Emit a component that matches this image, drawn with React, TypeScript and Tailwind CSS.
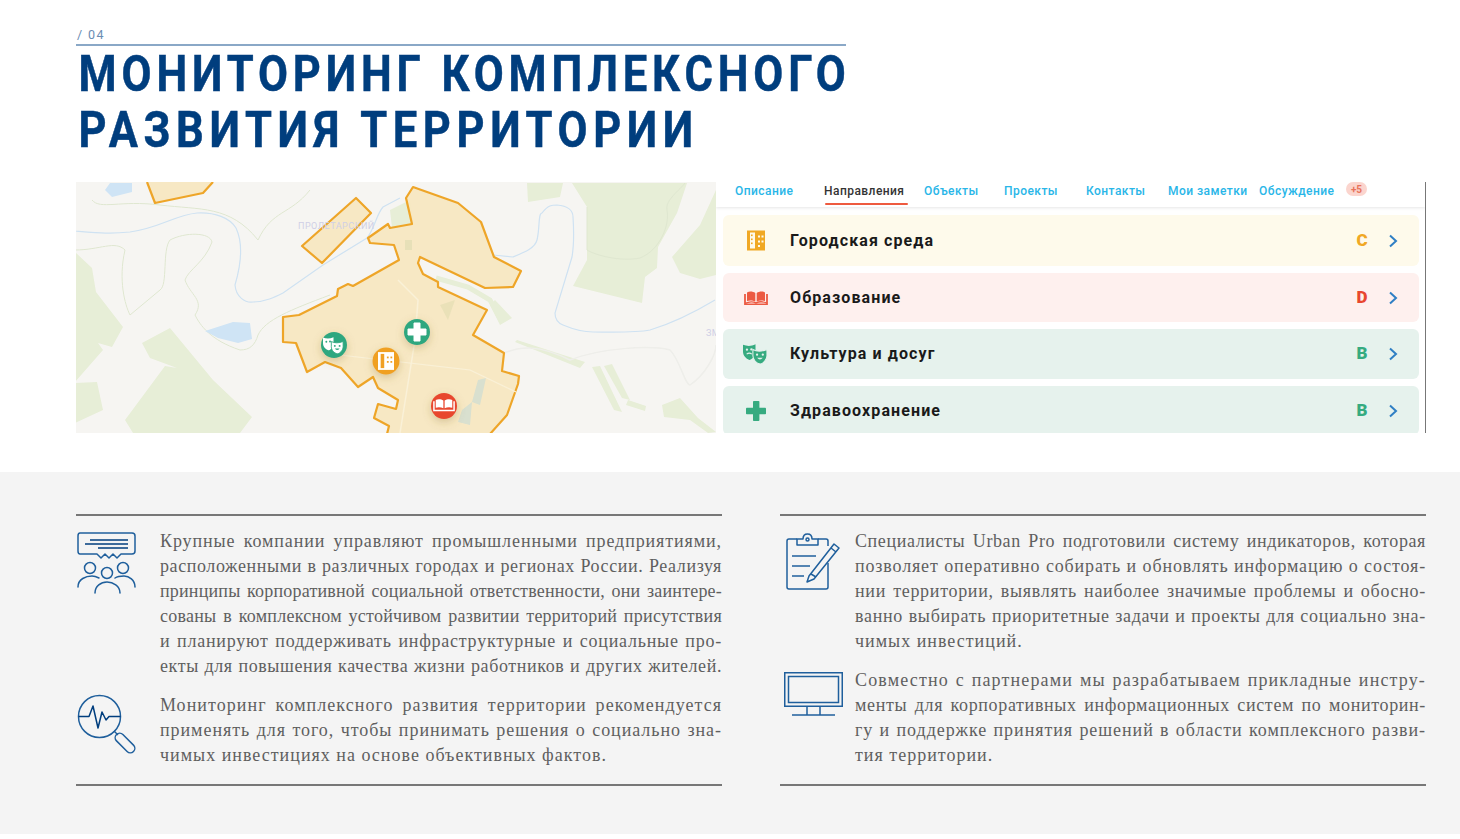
import React from "react";

const serif = "font-['Liberation_Serif',serif]";

const MaskIcon = ({ fg, bg, size = 25 }: { fg: string; bg: string; size?: number }) => (
  <svg width={size} height={size * 0.85} viewBox="0 0 24 20">
    <path d="M0 1.5 C4 3 8 3 12 1 L12 9 C12 13 8 16 6 16 C3 15 0 12 0 8 Z" fill={fg} />
    <circle cx="3.8" cy="6.2" r="1.1" fill={bg} />
    <circle cx="8" cy="6" r="1.1" fill={bg} />
    <path d="M3.5 10.5 Q6 8.5 8.5 10.5" stroke={bg} strokeWidth="1" fill="none" />
    <path d="M9.5 6 C13 8 18 8 23 6 L23 12 C23 16 19 20 16.5 20 C13 19.5 9.5 16 9.5 12 Z" fill={fg} stroke={bg} strokeWidth="1" />
    <circle cx="13.5" cy="11" r="1.1" fill={bg} />
    <circle cx="19" cy="11" r="1.1" fill={bg} />
    <path d="M13.5 14 Q16.3 17.5 19 14 Z" fill={bg} />
  </svg>
);

const BuildingIcon = ({ fg, bg, w = 18, h = 21 }: { fg: string; bg: string; w?: number; h?: number }) => (
  <svg width={w} height={h} viewBox="0 0 18 20">
    <rect x="0" y="0" width="18" height="20" fill={fg} />
    <rect x="3" y="2" width="5" height="16" fill={bg} />
    <rect x="4" y="4" width="1.6" height="1.6" fill={fg} />
    <rect x="4" y="8" width="1.6" height="1.6" fill={fg} />
    <rect x="4" y="12" width="1.6" height="1.6" fill={fg} />
    <rect x="11" y="5" width="2" height="2" fill={bg} />
    <rect x="14.5" y="5" width="2" height="2" fill={bg} />
    <rect x="11" y="10" width="2" height="2" fill={bg} />
    <rect x="14.5" y="10" width="2" height="2" fill={bg} />
    <rect x="11" y="14.5" width="2" height="2" fill={bg} />
  </svg>
);

const BookIcon = ({ fg, w = 24, h = 14 }: { fg: string; w?: number; h?: number }) => (
  <svg width={w} height={h} viewBox="0 0 24 14">
    <path d="M3 1.5 C5.5 0 9 0.5 11.3 2 L11.3 10.5 C9 9.3 5.5 9 3 10 Z" fill={fg} />
    <path d="M21 1.5 C18.5 0 15 0.5 12.7 2 L12.7 10.5 C15 9.3 18.5 9 21 10 Z" fill={fg} />
    <path d="M1 3 L1 13.5 L23 13.5 L23 3" fill="none" stroke={fg} strokeWidth="1.8" />
    <path d="M1 12.5 C5 10.5 9 10.5 12 12 C15 10.5 19 10.5 23 12" fill="none" stroke={fg} strokeWidth="1.4" />
  </svg>
);

const PlusIcon = ({ fg, size = 20 }: { fg: string; size?: number }) => (
  <svg width={size} height={size} viewBox="0 0 20 20">
    <rect x="7" y="0" width="6.4" height="20" rx="0.8" fill={fg} />
    <rect x="0" y="6.8" width="20" height="6.4" rx="0.8" fill={fg} />
  </svg>
);

const Map = () => (
  <svg width="640" height="251" viewBox="76 182 640 251" className="block shrink-0">
    <defs>
      <filter id="soft" x="-10%" y="-10%" width="120%" height="120%">
        <feGaussianBlur stdDeviation="0.5" />
      </filter>
      <filter id="shadow" x="-50%" y="-50%" width="200%" height="200%">
        <feDropShadow dx="0" dy="3" stdDeviation="4" floodColor="#8a6d2a" floodOpacity="0.3" />
      </filter>
    </defs>
    <rect x="76" y="182" width="640" height="251" fill="#f6f5f2" />
    <g filter="url(#soft)">
      <g fill="#e7eed7">
        <path d="M75 252 L92 268 L96 292 L123 327 L112 347 L98 343 L103 350 L75 382 Z" />
        <path d="M75 383 L97 382 L103 410 L75 423 Z" />
        <path d="M142 343 L170 328 L213 380 L252 417 L240 433 L133 433 L125 420 L165 366 L177 368 L150 358 Z" />
        <path d="M527 183 L563 183 L560 197 L528 202 Z" />
        <path d="M572 183 L687 183 L677 213 L658 247 L657 268 L645 277 L642 303 L573 286 L587 260 L587 220 L587 207 Z" />
        <path d="M716 190 L700 225 L672 257 L680 273 L700 279 L716 275 Z" />
        <path d="M390 210 L410 200 L414 225 L392 228 Z" />
        <path d="M517 340 L585 362 L580 368 L515 342 Z" />
        <path d="M592 367 L600 366 L622 412 L614 410 Z" />
        <path d="M604 366 L612 364 L630 400 L622 398 Z" />
        <path d="M628 400 L646 406 L645 411 L626 405 Z" />
        <path d="M662 405 L680 398 L698 418 L716 432 L708 433 L690 420 L664 417 Z" />
        <path d="M495 300 L512 318 L500 325 L490 305 Z" />
      </g>
      <path d="M436 278 L468 287 L490 300 L502 322" fill="none" stroke="#e7eed7" strokeWidth="5" />
      <g fill="none" stroke="#cfe2f2" strokeWidth="1.2">
        <path d="M75 231 C100 233 110 234 130 232 C160 228 175 215 197 213 C215 212 230 218 236 228 C244 245 240 268 235 285 C236 297 245 303 253 302 C265 302 275 297 283 293 L323 265 L367 238 C375 228 376 215 383 207 L400 198" />
        <path d="M493 255 L513 257 C525 252 535 248 537 240 C540 228 538 213 542 213 C548 205 552 205 557 205 C568 206 573 210 573 217 C574 232 574 245 572 257 L555 313 C555 320 558 323 563 325 C575 330 585 332 593 332 C610 332 635 333 650 330 C670 324 695 312 715 300" />
      </g>
      <g fill="none" stroke="#dfe7d0" strokeWidth="1">
        <path d="M92 200 C100 210 120 200 160 205 C200 210 230 205 258 240 C272 210 290 215 310 190" />
        <path d="M75 250 C100 250 115 240 125 250 C118 280 125 305 130 315 L160 290 C168 285 162 250 170 240 C185 232 210 232 212 242 C205 262 188 270 185 280 C190 295 205 300 195 315 C200 325 210 340 240 350 C250 350 255 345 258 335 C265 320 290 310 330 295" />
        <path d="M587 207 L587 250 C595 255 620 262 640 258 C660 250 670 225 667 210 C665 200 680 190 685 183" />
        <path d="M500 355 C520 345 540 345 570 360 C600 348 650 345 670 350 C680 360 685 385 690 385 C705 375 716 355 716 345" stroke="#eeeeea" strokeWidth="1.5" />
      </g>
      <path d="M205 331 L233 322 L250 323 L252 339 L238 343 L218 338 Z" fill="#cfe4f5" />
      <path d="M105 190 L110 183 L132 183 L132 192 L112 197 Z" fill="#cfe4f5" />
    </g>
    <g fill="#f7e7c1" fillOpacity="0.95" stroke="#eea528" strokeWidth="2.2" strokeLinejoin="round">
      <path d="M147 182 L155 203 L203 193 L213 182" />
      <path d="M356 198 L371 213 L322 263 L302 246 Z" />
      <path d="M283 317 L299 315 L337 296 L338 289 L348 284 L353 286 L399 260 L394 245 L370 243 L368 238 L388 224 L390 228 L412 224 L406 198 L413 187 L458 203 L481 222 L494 257 L521 271 L513 287 L485 288 L420 257 L418 263 L423 274 L438 282 L438 287 L487 310 L473 335 L504 353 L502 371 L519 376 L518 384 L507 415 L490 434 L387 434 L389 426 L374 418 L378 404 L396 409 L398 400 L378 388 L373 377 L358 387 L341 368 L325 362 L307 372 L296 343 L283 342 Z" />
    </g>
    <g filter="url(#soft)">
      <path d="M405 240 L412 240 L412 250 L405 250 Z" fill="#e7e0b8" />
      <path d="M440 305 L455 300 L448 320 Z" fill="#e4deb4" opacity="0.7" />
      <path d="M478 380 L486 378 L480 405 L472 402 Z" fill="#d9e0cf" />
      <path d="M462 410 L472 402 L470 425 L458 422 Z" fill="#d9e0cf" />
      <path d="M398 280 L418 300 L415 340 L400 433" fill="none" stroke="#faf1d8" strokeWidth="1.5" />
      <path d="M340 355 L470 370 L516 392" fill="none" stroke="#faf1d8" strokeWidth="1.2" />
    </g>
    <text x="298" y="229" fontFamily="Roboto, sans-serif" fontSize="9" letterSpacing="0.5" fill="#cfcfe6">ПРОЛЕТАРСКИЙ</text>
    <text x="706" y="336" fontFamily="Roboto, sans-serif" fontSize="9" letterSpacing="0.5" fill="#cfcfe6">ЗМ</text>
    <g filter="url(#shadow)">
      <circle cx="334" cy="345" r="13" fill="#2fa77f" />
      <circle cx="386" cy="361" r="13.5" fill="#f0a024" />
      <circle cx="417" cy="332" r="13" fill="#2fa77f" />
      <circle cx="444" cy="406" r="13" fill="#e8472f" />
    </g>
    <svg x="323" y="336" width="21" height="18" viewBox="0 0 24 20"><path d="M0 1.5 C4 3 8 3 12 1 L12 9 C12 13 8 16 6 16 C3 15 0 12 0 8 Z" fill="#fff" /><circle cx="3.8" cy="6.2" r="1.1" fill="#2fa77f" /><circle cx="8" cy="6" r="1.1" fill="#2fa77f" /><path d="M9.5 6 C13 8 18 8 23 6 L23 12 C23 16 19 20 16.5 20 C13 19.5 9.5 16 9.5 12 Z" fill="#fff" stroke="#2fa77f" /><circle cx="13.5" cy="11" r="1.1" fill="#2fa77f" /><circle cx="19" cy="11" r="1.1" fill="#2fa77f" /><path d="M13.5 14 Q16.3 17.5 19 14 Z" fill="#2fa77f" /></svg>
    <svg x="378" y="352" width="16" height="18" viewBox="0 0 18 20"><rect width="18" height="20" fill="#fff" /><rect x="3" y="2" width="4" height="16" fill="#f0a024" /><rect x="10" y="5" width="2" height="2" fill="#f0a024" /><rect x="14" y="5" width="2" height="2" fill="#f0a024" /><rect x="10" y="10" width="2" height="2" fill="#f0a024" /><rect x="14" y="10" width="2" height="2" fill="#f0a024" /></svg>
    <path d="M414 323 H420 V329 H426 V335 H420 V341 H414 V335 H408 V329 H414 Z" fill="#fff" strokeLinejoin="round" stroke="#fff" />
    <svg x="433" y="398" width="22" height="14" viewBox="0 0 24 14"><path d="M3 1.5 C5.5 0 9 0.5 11.3 2 L11.3 10.5 C9 9.3 5.5 9 3 10 Z" fill="#fff" /><path d="M21 1.5 C18.5 0 15 0.5 12.7 2 L12.7 10.5 C15 9.3 18.5 9 21 10 Z" fill="#fff" /><path d="M1 3 L1 13 L23 13 L23 3" fill="none" stroke="#fff" strokeWidth="1.6" /></svg>
  </svg>
);

const tabs: [string, string][] = [
  ["Описание", "w-[89px]"],
  ["Направления", "w-[100px]"],
  ["Объекты", "w-[80px]"],
  ["Проекты", "w-[82px]"],
  ["Контакты", "w-[82px]"],
  ["Мои заметки", "w-[91px]"],
  ["Обсуждение", "w-[87px]"],
];

const rowFont = "font-['Roboto',sans-serif]";

const Row = ({ bg, icon, title, grade, gradeColor, h }: { bg: string; icon: React.ReactNode; title: string; grade: string; gradeColor: string; h: string }) => (
  <div className={`flex items-center rounded-md ${bg} ${h}`}>
    <div className="flex w-[67px] justify-center pr-[2px]">{icon}</div>
    <div className={`flex-1 text-[16px] font-bold tracking-[1.1px] text-[#1a1a1a] ${rowFont}`}>{title}</div>
    <div className={`w-[14px] text-center text-[17px] font-black ${gradeColor} ${rowFont}`}>{grade}</div>
    <svg width="10" height="14" viewBox="0 0 10 14" className="ml-[19px] mr-[21px]">
      <path d="M2 1.5 L8 7 L2 12.5" fill="none" stroke="#2f7fc4" strokeWidth="2" />
    </svg>
  </div>
);

const Para = ({ lines }: { lines: [string, string, boolean?][] }) => (
  <div>
    {lines.map(([text, track, last], i) => (
      <div key={i} className={`h-[25px] leading-[25px] ${track} ${last ? "" : "[text-align:justify] [text-align-last:justify]"}`}>{text}</div>
    ))}
  </div>
);

const stroke = "#1f5f9c";

const ChatIcon = () => (
  <svg width="60" height="62" viewBox="0 0 60 62" fill="none" stroke={stroke} strokeWidth="1.5">
    <path d="M3 1 H55 Q58 1 58 4 V19 Q58 22 55 22 H44 L40 26 L36 22 L32 26 L28 22 L24 26 L20 22 H3 Q1 22 1 19 V4 Q1 1 3 1 Z" strokeLinejoin="round" />
    <path d="M13 8 H51 M8 12 H51 M21 16 H51" stroke="#003e7e" strokeWidth="1.5" />
    <circle cx="13" cy="36" r="5.5" />
    <circle cx="46" cy="36" r="5.5" />
    <circle cx="30" cy="41" r="5.5" />
    <path d="M1 55 C1 47 9 44 15 44 C18 44 20 45 22 46 M38 46 C41 44 44 44 47 44 C52 44 58 48 58 55" strokeLinecap="round" />
    <path d="M18 61 C18 54 24 50 30 50 C36 50 43 54 43 61" strokeLinecap="round" />
  </svg>
);

const SearchIcon = () => (
  <svg width="60" height="60" viewBox="0 0 60 60" fill="none" stroke={stroke} strokeWidth="1.5">
    <circle cx="22.5" cy="22.5" r="21" />
    <path d="M1.5 22.5 H12 L16 12 L21 34 L25 18 L29 26 L32 22.5 H43.5" stroke="#003e7e" strokeLinejoin="round" />
    <path d="M37 37 L41 41" />
    <rect x="-12" y="-4.5" width="24" height="9" rx="4.5" transform="translate(48 49) rotate(45)" />
  </svg>
);

const ClipboardIcon = () => (
  <svg width="54" height="58" viewBox="0 0 54 58" fill="none" stroke={stroke} strokeWidth="1.5" strokeLinejoin="round">
    <path d="M11 6 H3 Q1 6 1 8 V54 Q1 56 3 56 H40 Q42 56 42 54 V30" />
    <path d="M32 6 H40 Q42 6 42 8 V13" />
    <path d="M11 12 V6 H17 Q17 1 21.5 1 Q26 1 26 6 H32 V12 Z" />
    <circle cx="21.5" cy="6.5" r="1.5" />
    <path d="M6 23 H30 M6 33 H24 M6 43 H18" />
    <path d="M23 43 L48 11 L53 15 L28 46 L21 49 Z" />
    <path d="M45 15 L50 19 M25 41 L30 44" />
  </svg>
);

const MonitorIcon = () => (
  <svg width="59" height="44" viewBox="0 0 59 44" fill="none" stroke={stroke} strokeWidth="1.5">
    <rect x="0.75" y="0.75" width="57.5" height="33.5" strokeWidth="1.5" />
    <rect x="4.5" y="4.5" width="50" height="26" />
    <path d="M23 34 V43 M36 34 V43 M8 43 H51" />
  </svg>
);

export default function App() {
  return (
    <div className="relative h-[839px] w-[1460px] overflow-hidden bg-white">
      <div className="h-[472px] pl-[76px] pt-[27px]">
        <div className="h-[19px] w-[770px] border-b-2 border-[#8aa8c7] pl-[1px] font-['Roboto',sans-serif] text-[12.5px] leading-[15px] tracking-[1.4px] text-[#6b8db3]">/ 04</div>
        <h1 className="origin-left scale-x-[0.87] whitespace-nowrap pl-[3px] font-['Roboto',sans-serif] text-[50px] font-bold leading-[56px] text-[#003e7e] [-webkit-text-stroke:0.5px_#003e7e]">
          <div className="tracking-[5.6px]">МОНИТОРИНГ КОМПЛЕКСНОГО</div>
          <div className="tracking-[6.45px]">РАЗВИТИЯ ТЕРРИТОРИИ</div>
        </h1>
        <div className="mt-[24px] flex h-[251px] w-[1350px]">
          <Map />
          <div className="flex w-[710px] flex-col overflow-hidden border-r-[1.5px] border-[#777]">
            <div className={`flex h-[25px] shrink-0 items-start pl-[19px] shadow-[0_1px_3px_rgba(0,0,0,0.1)] text-[12px] font-medium tracking-[0.45px] text-[#29b6e8] ${rowFont}`}>
              {tabs.map(([t, w], i) => (
                <div key={t} className={`relative h-[24px] shrink-0 whitespace-nowrap leading-[18px] ${w} ${i === 1 ? "text-[#333]" : ""}`}>
                  {t}
                  {i === 1 && <div className="absolute bottom-[1px] left-[1px] h-[2px] w-[83px] rounded bg-[#ee5a3f]" />}
                </div>
              ))}
              <div className="flex h-[14px] w-[21px] items-center justify-center rounded-full bg-[#fbd5ce] text-[10px] font-bold tracking-normal text-[#e8735c]">+5</div>
            </div>
            <div className="flex flex-col gap-[7px] pl-[7px] pr-[6px] pt-[8px]">
              <Row bg="bg-[#fefaeb]" h="h-[51px] shrink-0" title="Городская среда" grade="C" gradeColor="text-[#f0a824]" icon={<BuildingIcon fg="#f0a824" bg="#fefaeb" />} />
              <Row bg="bg-[#fef0ee]" h="h-[49px] shrink-0" title="Образование" grade="D" gradeColor="text-[#e8472f]" icon={<BookIcon fg="#ec5a42" />} />
              <Row bg="bg-[#e6f2ed]" h="h-[50px] shrink-0" title="Культура и досуг" grade="B" gradeColor="text-[#36ab80]" icon={<MaskIcon fg="#36ab80" bg="#e6f2ed" />} />
              <Row bg="bg-[#e6f2ed]" h="h-[49px] shrink-0" title="Здравоохранение" grade="B" gradeColor="text-[#36ab80]" icon={<PlusIcon fg="#36ab80" />} />
            </div>
          </div>
        </div>
      </div>
      <div className={`h-[362px] bg-[#f4f4f4] pl-[76px] pt-[42px] text-[18px] text-[#5f5f5f] ${serif}`}>
        <div className="flex gap-[58px]">
          <div className="flex h-[272px] w-[646px] flex-col border-y-2 border-[#777]">
            <div className="flex h-[177px] pt-[13px]">
              <div className="w-[84px] shrink-0 pl-[1px] pt-[3px]"><ChatIcon /></div>
              <div className="w-[562px]">
                <Para lines={[
                  ["Крупные компании управляют промышленными предприятиями,", "tracking-[0.9px]"],
                  ["расположенными в различных городах и регионах России. Реализуя", "tracking-[0.6px]"],
                  ["принципы корпоративной социальной ответственности, они заинтере-", "tracking-[0.2px]"],
                  ["сованы в комплексном устойчивом развитии территорий присутствия", "tracking-[0.25px]"],
                  ["и планируют поддерживать инфраструктурные и социальные про-", "tracking-[0.75px]"],
                  ["екты для повышения качества жизни работников и других жителей.", "tracking-[0.6px]"],
                ]} />
              </div>
            </div>
            <div className="flex">
              <div className="w-[84px] shrink-0 pl-[1px] pt-[1px]"><SearchIcon /></div>
              <div className="w-[562px]">
                <Para lines={[
                  ["Мониторинг комплексного развития территории рекомендуется", "tracking-[1.05px]"],
                  ["применять для того, чтобы принимать решения о социально зна-", "tracking-[0.95px]"],
                  ["чимых инвестициях на основе объективных фактов.", "tracking-[1px]", true],
                ]} />
              </div>
            </div>
          </div>
          <div className="flex h-[272px] w-[646px] flex-col border-y-2 border-[#777]">
            <div className="flex h-[152px] pt-[13px]">
              <div className="w-[75px] shrink-0 pl-[6px] pt-[4px]"><ClipboardIcon /></div>
              <div className="w-[571px]">
                <Para lines={[
                  ["Специалисты Urban Pro подготовили систему индикаторов, которая", "tracking-[0.6px]"],
                  ["позволяет оперативно собирать и обновлять информацию о состоя-", "tracking-[0.85px]"],
                  ["нии территории, выявлять наиболее значимые проблемы и обосно-", "tracking-[0.7px]"],
                  ["ванно выбирать приоритетные задачи и проекты для социально зна-", "tracking-[0.7px]"],
                  ["чимых инвестиций.", "tracking-[1px]", true],
                ]} />
              </div>
            </div>
            <div className="flex">
              <div className="w-[75px] shrink-0 pl-[4px] pt-[4px]"><MonitorIcon /></div>
              <div className="w-[571px]">
                <Para lines={[
                  ["Совместно с партнерами мы разрабатываем прикладные инстру-", "tracking-[1.15px]"],
                  ["менты для корпоративных информационных систем по мониторин-", "tracking-[0.65px]"],
                  ["гу и поддержке принятия решений в области комплексного разви-", "tracking-[0.95px]"],
                  ["тия территории.", "tracking-[1px]", true],
                ]} />
              </div>
            </div>
          </div>
        </div>
      </div>
    </div>
  );
}
